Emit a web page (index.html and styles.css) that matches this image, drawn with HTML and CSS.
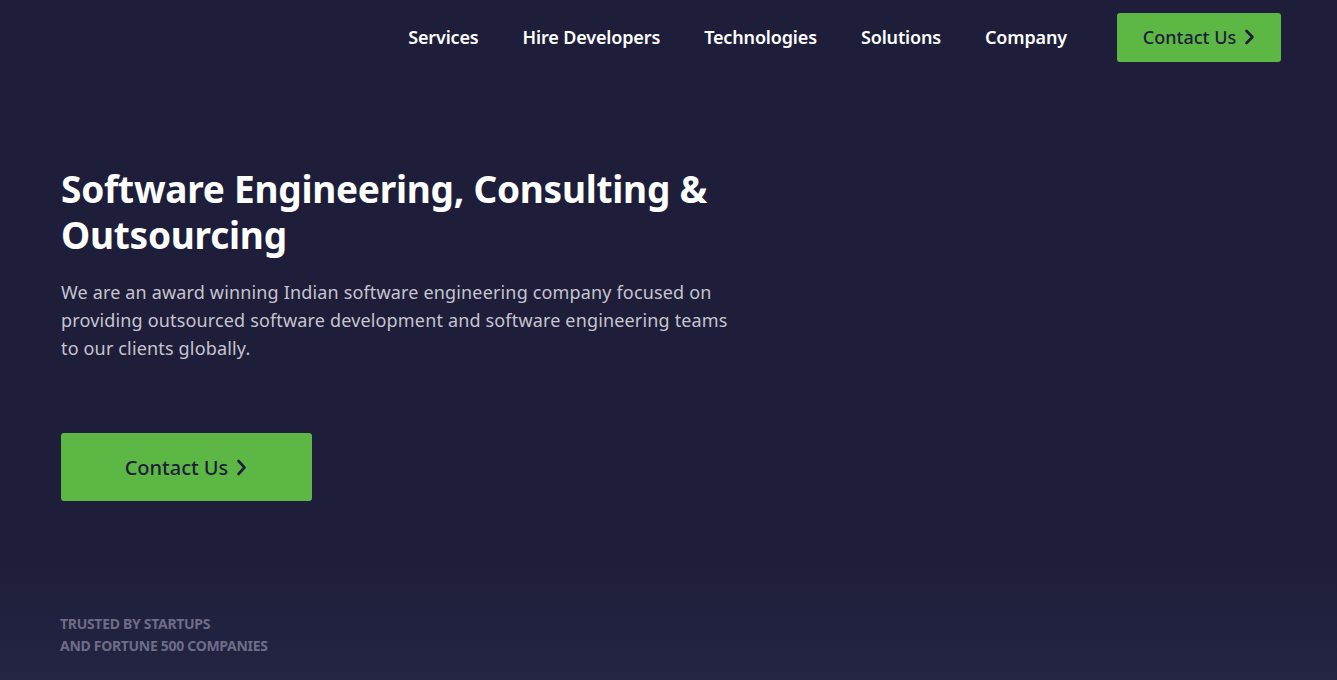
FILE: index.html
```html
<!DOCTYPE html>
<html lang="en">
<head>
<meta charset="utf-8">
<title>Software Engineering, Consulting &amp; Outsourcing</title>
<link rel="stylesheet" href="styles.css">
</head>
<body>
<div class="page">
  <header class="topbar">
    <nav class="nav">
      <a class="nav-link" href="#">Services</a>
      <a class="nav-link" href="#">Hire Developers</a>
      <a class="nav-link" href="#">Technologies</a>
      <a class="nav-link" href="#">Solutions</a>
      <a class="nav-link" href="#">Company</a>
    </nav>
    <a class="btn btn-nav" href="#">Contact Us
      <svg class="chev" viewBox="0 0 11 16" width="11" height="16"><path d="M2.5 2l6 6-6 6" fill="none" stroke="currentColor" stroke-width="2.6" stroke-linecap="round" stroke-linejoin="round"/></svg>
    </a>
  </header>
  <main class="hero">
    <h1 class="hero-title">Software Engineering, Consulting &amp; Outsourcing</h1>
    <p class="hero-text">We are an award winning Indian software engineering company focused on providing outsourced software development and software engineering teams to our clients globally.</p>
    <a class="btn btn-hero" href="#">Contact Us
      <svg class="chev" viewBox="0 0 11 17" width="11" height="17"><path d="M2.5 2l6 6.5-6 6.5" fill="none" stroke="currentColor" stroke-width="2.6" stroke-linecap="round" stroke-linejoin="round"/></svg>
    </a>
  </main>
  <section class="trusted">
    <p class="trusted-text">TRUSTED BY STARTUPS<br>AND FORTUNE 500 COMPANIES</p>
  </section>
</div>
</body>
</html>
```

FILE: styles.css
```css
* { box-sizing: border-box; }
html, body { margin: 0; padding: 0; }
body {
  font-family: "Noto Sans", "Open Sans", sans-serif;
  background: #1e1e3a;
  color: #fff;
  height: 680px;
  overflow: hidden;
}
.page {
  min-height: 680px;
  background: linear-gradient(to bottom, #1e1e3a 0px, #1e1e3a 560px, #232543 680px);
}
.topbar {
  display: flex;
  justify-content: flex-end;
  align-items: center;
  padding: 13px 56px 0 0;
  height: 62px;
}
.nav {
  display: flex;
  gap: 44px;
  margin-right: 50px;
  margin-top: -1px;
}
.nav-link {
  color: #fff;
  text-decoration: none;
  font-size: 18px;
  font-weight: 600;
  letter-spacing: -0.15px;
}
.btn {
  display: inline-flex;
  align-items: center;
  justify-content: center;
  gap: 8px;
  background: #5db744;
  color: #1e1e3a;
  text-decoration: none;
  border-radius: 3px;
  font-weight: 500;
}
.btn-nav {
  width: 164px;
  height: 49px;
  font-size: 18px;
  padding-bottom: 1px;
}
.hero {
  padding: 104px 0 0 61px;
}
.hero-title {
  margin: 0;
  font-size: 37px;
  line-height: 46px;
  font-weight: 700;
  max-width: 700px;
  letter-spacing: -0.25px;
}
.hero-text {
  margin: 20px 0 0;
  max-width: 675px;
  font-size: 18px;
  line-height: 28px;
  color: #c6c4cf;
  letter-spacing: 0.16px;
}
.btn-hero {
  margin-top: 71px;
  width: 251px;
  height: 68px;
  font-size: 20px;
  padding-right: 1px;
}
.trusted {
  padding: 112px 0 0 60px;
}
.trusted-text {
  margin: 0;
  font-size: 14px;
  line-height: 22px;
  font-weight: 700;
  color: #6e6d88;
  letter-spacing: -0.3px;
}
```
